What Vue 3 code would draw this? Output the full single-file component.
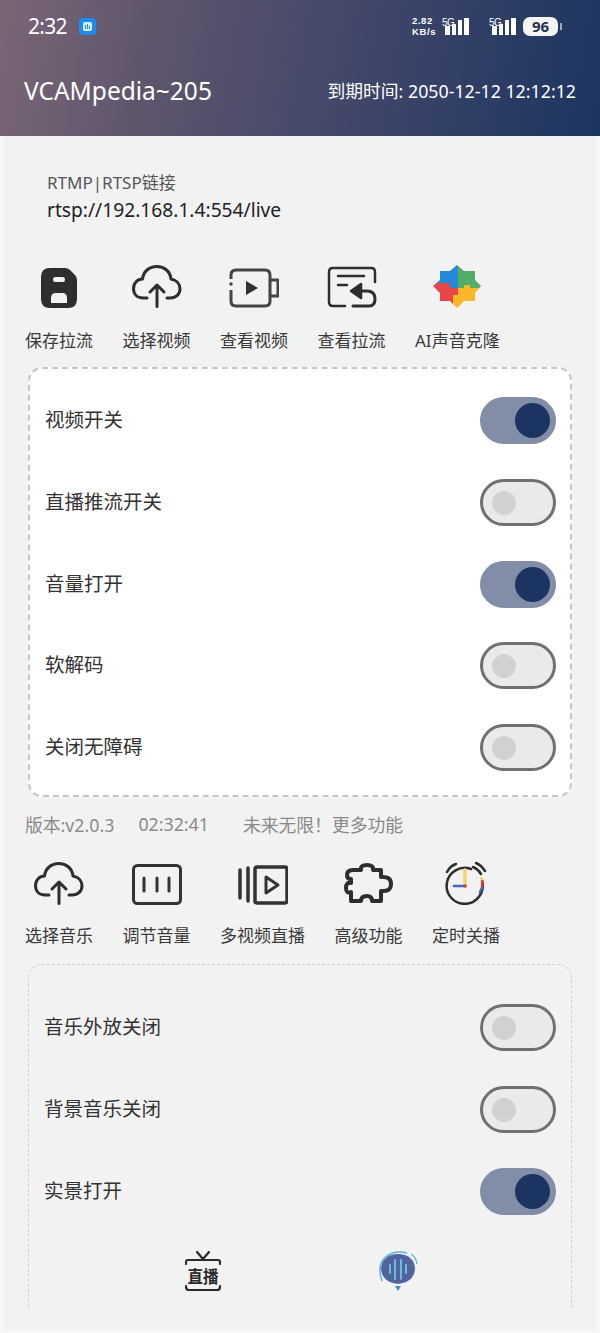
<template>
  <div class="page">
    <header class="header">
      <div class="status">
        <span class="clock">2:32</span>
        <svg class="app-badge" width="17" height="17" viewBox="0 0 17 17">
          <rect x="0" y="0" width="17" height="17" rx="4" fill="#1c8df0" />
          <rect x="4" y="4" width="9" height="9" rx="2" fill="#d8eeff" />
          <path d="M6.500 11V7M8.500 11V6M10.500 11V8" stroke="#1c8df0" stroke-width="1" />
        </svg>
        <div class="status-right">
          <span class="speed">2.82<br />KB/s</span>
          <span class="net">5G</span>
          <svg class="bars" width="24" height="17" viewBox="0 0 24 17"><path d="M0 8h5v9H0zM7 6h4v11H7zM13 2h4v15h-4zM19 0h5v17h-5z" fill="#fff" /></svg>
          <span class="net second">5G</span>
          <svg class="bars" width="24" height="17" viewBox="0 0 24 17"><path d="M0 8h5v9H0zM7 6h4v11H7zM13 2h4v15h-4zM19 0h5v17h-5z" fill="#fff" /></svg>
          <span class="battery">96</span>
          <span class="battery-tip"></span>
        </div>
      </div>
      <div class="title-row">
        <span class="title">VCAMpedia~205</span>
        <span class="expire">到期时间: 2050-12-12 12:12:12</span>
      </div>
    </header>

    <main class="content">
      <div class="link">
        <div class="link-label">RTMP|RTSP链接</div>
        <div class="link-url">rtsp://192.168.1.4:554/live</div>
      </div>

      <div class="tools first">
        <div class="tool">
          <svg width="36" height="40" viewBox="0 0 36 40">
            <path fill-rule="evenodd" fill="#2e2e2e" d="M9 0H24Q27 0 29 2L34 7Q36 9 36 12V31Q36 40 27 40H9Q0 40 0 31V9Q0 0 9 0ZM14 9Q12 9 12 11.500T14 14H22Q24 14 24 11.500T22 9ZM15 25Q10 25 10 30V35H26V30Q26 25 21 25Z" />
          </svg>
          <span>保存拉流</span>
        </div>
        <div class="tool">
          <svg width="50" height="43" viewBox="0 0 50 43" fill="none" stroke="#2e2e2e" stroke-width="3" stroke-linecap="round" stroke-linejoin="round">
            <path d="M15 33H11C5 33 1.500 29 1.500 23.500C1.500 18 5.500 14 10.500 14C11.500 6 17.500 1.500 25 1.500C32 1.500 38 6 39 14C44.500 15 48 19 48 24C48 29 44 33 38 33H35" />
            <path d="M25 41.500V20M18 27L25 20L32 27" />
          </svg>
          <span>选择视频</span>
        </div>
        <div class="tool">
          <svg width="50" height="40" viewBox="0 0 50 40" fill="none" stroke="#444" stroke-width="3">
            <path d="M2 11V7Q2 2 7 2H36Q41 2 41 7V33Q41 38 36 38H7Q2 38 2 33V22" />
            <path d="M42 12H49V28H42" stroke-linejoin="round" />
            <circle cx="2" cy="16" r="1.700" fill="#444" stroke="none" />
            <path d="M17 13L29 20L17 27Z" fill="#333" stroke="none" />
          </svg>
          <span>查看视频</span>
        </div>
        <div class="tool">
          <svg width="50" height="42" viewBox="0 0 50 42" fill="none" stroke="#2e2e2e" stroke-width="2.500" stroke-linecap="round">
            <path d="M48 16V6Q48 2 44 2H6Q2 2 2 6V36Q2 40 6 40H18" />
            <path d="M26 40H42Q48 40 48 33Q48 25 40 25H32" stroke-width="3" />
            <path d="M11 10H37M11 19H20" />
            <path d="M24 25L34 18V32Z" fill="#2e2e2e" stroke-linejoin="round" />
          </svg>
          <span>查看拉流</span>
        </div>
        <div class="tool">
          <svg width="48" height="43" viewBox="0 0 48 43">
            <clipPath id="star-clip">
              <polygon points="24,0 31,6 42,6 42,15 48,21 42,28 42,36 31,36 24,43 17,36 7,36 7,28 0,21 7,15 7,6 17,6" />
            </clipPath>
            <g clip-path="url(#star-clip)">
              <path d="M0 0H25V23H17V18H0Z" fill="#2389d8" />
              <path d="M25 0H48V23H25Z" fill="#52ad69" />
              <path d="M0 18H17V23H25V30H20V43H0Z" fill="#e8474a" />
              <path d="M25 23H31V20H37V23H48V43H20V30H25Z" fill="#fbb72a" />
            </g>
          </svg>
          <span>AI声音克隆</span>
        </div>
      </div>

      <section class="card solid">
        <div v-for="row in topRows" :key="row.label" class="row">
          <span class="row-label">{{ row.label }}</span>
          <span class="toggle" :class="{ on: row.on }"><i></i></span>
        </div>
      </section>

      <div class="version">
        <span>版本:v2.0.3</span>
        <span>02:32:41</span>
        <span class="slogan">未来无限！更多功能</span>
      </div>

      <div class="tools second-row">
        <div class="tool">
          <svg width="50" height="43" viewBox="0 0 50 43" fill="none" stroke="#2e2e2e" stroke-width="3" stroke-linecap="round" stroke-linejoin="round">
            <path d="M15 33H11C5 33 1.500 29 1.500 23.500C1.500 18 5.500 14 10.500 14C11.500 6 17.500 1.500 25 1.500C32 1.500 38 6 39 14C44.500 15 48 19 48 24C48 29 44 33 38 33H35" />
            <path d="M25 41.500V20M18 27L25 20L32 27" />
          </svg>
          <span>选择音乐</span>
        </div>
        <div class="tool">
          <svg width="50" height="41" viewBox="0 0 50 41" fill="none" stroke="#333" stroke-width="3" stroke-linecap="round">
            <rect x="1.500" y="1.500" width="47" height="38" rx="4" />
            <path d="M12 14V27M25 14V27M37 14V27" />
          </svg>
          <span>调节音量</span>
        </div>
        <div class="tool">
          <svg width="50" height="40" viewBox="0 0 50 40" fill="none" stroke="#333" stroke-width="3.500">
            <path d="M2 5V33M10 3V36" stroke-linecap="round" />
            <rect x="17" y="2" width="32" height="36" rx="2" />
            <path d="M28 12L40 20L28 28Z" stroke-width="3" stroke-linejoin="round" />
          </svg>
          <span>多视频直播</span>
        </div>
        <div class="tool">
          <svg width="50" height="42" viewBox="0 0 50 42" fill="none" stroke="#2e2e2e" stroke-width="4" stroke-linejoin="round">
            <path d="M9 7H17Q16 2 23 2Q30 2 29 7H37V14Q47 13 47 21Q47 29 37 28V38H28Q28 33 23 33Q17 33 17 38H7V29Q2 31 2 25Q2 19 7 20V16Q3 16 3 12Q3 7 9 7Z" />
          </svg>
          <span>高级功能</span>
        </div>
        <div class="tool">
          <svg width="42" height="44" viewBox="0 0 42 44" fill="none" stroke-width="2.500" stroke-linecap="round">
            <path d="M37 20A18 18 0 1 1 26 8" stroke="#2e2e2e" />
            <path d="M2 11Q5 5 11 3M31 2Q36 4 40 10M28 6Q33 8 36 13" stroke="#2e2e2e" />
            <path d="M20 9V24" stroke="#f3d66b" stroke-width="3.500" />
            <path d="M9 25H20" stroke="#3f69c4" />
            <circle cx="20" cy="25" r="1.800" fill="#d83a3a" />
            <path d="M36 17L37.500 20" stroke="#f3d66b" />
            <path d="M37.500 20L37 27" stroke="#d83a3a" />
            <path d="M37 27L35 31" stroke="#3f69c4" />
          </svg>
          <span>定时关播</span>
        </div>
      </div>

      <section class="card open">
        <div v-for="row in bottomRows" :key="row.label" class="row">
          <span class="row-label">{{ row.label }}</span>
          <span class="toggle" :class="{ on: row.on }"><i></i></span>
        </div>
      </section>
    </main>

    <nav class="tabbar">
      <svg class="tab-live" width="36" height="40" viewBox="0 0 36 40" fill="none" stroke="#2a2a2a" stroke-width="2.200" stroke-linecap="round">
        <path d="M12 1L18 8L24 1M1 13V11Q1 9 3 9H33Q35 9 35 11V13M1 35V36Q1 39 4 39H32Q35 39 35 36V35" />
        <text x="18" y="32" text-anchor="middle" class="live-text" textLength="31" lengthAdjust="spacingAndGlyphs">直播</text>
      </svg>
      <svg class="tab-voice" width="40" height="42" viewBox="0 0 40 42" fill="none">
        <path d="M20 34Q4 32 3 19C3 10 10 4 20 4C30 4 37 10 37 19Q36 32 20 34Z" fill="#50659d" />
        <path d="M17 36L20 41L23 36Z" fill="#3d8fd0" />
        <path d="M4 31Q-2 14 9 6Q17 0 29 3" stroke="#62b4e0" stroke-width="1.600" />
        <path d="M33 4Q38 7 39 14" stroke="#62b4e0" stroke-width="1.200" />
        <path d="M12 15V23M17 10V29M23 10V29M28 15V23" stroke="#79bfe8" stroke-width="1.800" stroke-linecap="round" />
      </svg>
    </nav>
  </div>
</template>

<script setup>
const topRows = [
  { label: '视频开关', on: true },
  { label: '直播推流开关', on: false },
  { label: '音量打开', on: true },
  { label: '软解码', on: false },
  { label: '关闭无障碍', on: false },
]

const bottomRows = [
  { label: '音乐外放关闭', on: false },
  { label: '背景音乐关闭', on: false },
  { label: '实景打开', on: true },
]
</script>

<style>
html,
body {
  margin: 0;
  overflow: hidden;
}
</style>

<style scoped>
.page {
  position: relative;
  width: 600px;
  height: 1333px;
  overflow: hidden;
  background: #f7f7f8;
  font-family: "Noto Sans", "Noto Sans CJK SC", sans-serif;
  color: #333;
}

.header {
  height: 136px;
  box-sizing: border-box;
  padding: 0 24px;
  color: #fff;
  background: linear-gradient(100deg, #7b6577 0%, #5f566c 25%, #40466a 60%, #1c3560 100%);
}

.status {
  display: flex;
  align-items: center;
  height: 52px;
}

.clock {
  font-size: 21px;
  letter-spacing: -0.700px;
  width: 51px;
  margin-left: 4px;
}

.status-right {
  display: flex;
  align-items: center;
  height: 20px;
  margin-left: auto;
  margin-right: 14px;
}

.speed {
  font-family: "Liberation Sans", sans-serif;
  font-size: 9.500px;
  font-weight: 700;
  letter-spacing: 0.600px;
  line-height: 11px;
  width: 30px;
  white-space: nowrap;
}

.net {
  font-family: "Liberation Sans", sans-serif;
  font-size: 10px;
  align-self: flex-start;
  margin: 1px -10px 0 0;
  line-height: 11px;
  width: 13px;
  letter-spacing: -0.500px;
}

.net.second {
  margin-left: 20px;
}

.bars {
  margin-top: 1px;
}

.battery {
  margin-left: 7px;
  width: 35px;
  height: 19px;
  border-radius: 7px;
  background: #f4f4f4;
  color: #283350;
  font-size: 15px;
  font-weight: 700;
  line-height: 19px;
  text-align: center;
}

.battery-tip {
  width: 2px;
  height: 7px;
  margin-left: 2px;
  background: #9ea6b8;
}

.title-row {
  display: flex;
  justify-content: space-between;
  align-items: center;
  height: 76px;
}

.title {
  font-size: 24.500px;
}

.expire {
  font-size: 17.800px;
}

.content {
  box-sizing: border-box;
  height: 1194px;
  margin: 0 3px;
  padding: 0 25px;
  background: #f2f2f3;
}

.link {
  padding: 35px 0 0 19px;
}

.link-label {
  font-size: 17px;
  line-height: 23px;
  color: #555;
}

.link-url {
  font-size: 19.200px;
  line-height: 32px;
  color: #222;
}

.tools {
  display: flex;
  gap: 29.500px;
  margin-left: -3px;
}

.tools.first {
  margin-top: 22px;
  height: 105px;
}

.tools.second-row {
  margin-top: 8px;
  height: 90px;
}

.tool {
  display: flex;
  flex-direction: column;
  align-items: center;
  justify-content: flex-end;
  font-size: 17px;
  line-height: 24px;
  color: #3a3a3a;
  white-space: nowrap;
}

.tool svg {
  margin-bottom: 21px;
}

.second-row .tool svg {
  margin-bottom: 19px;
}

.card {
  box-sizing: border-box;
  border-radius: 14px;
}

.card.solid {
  height: 430px;
  margin-top: 14px;
  padding-top: 11px;
  background: #fff;
  border: 2px dashed #c6c6c6;
}

.card.solid .row {
  padding-right: 14px;
}

.card.open {
  height: 345px;
  margin-top: 16px;
  padding-top: 22px;
  border: 1px dashed #cfcfcf;
  border-bottom: none;
  border-radius: 14px 14px 0 0;
}

.row {
  display: flex;
  align-items: center;
  justify-content: space-between;
  height: 81.700px;
  padding: 0 15px;
  font-size: 19.500px;
  color: #333;
}

.row-label {
  padding-bottom: 4px;
}

.toggle {
  display: flex;
  align-items: center;
  box-sizing: border-box;
  width: 76px;
  height: 47px;
  padding-left: 9px;
  border: 3px solid #707070;
  border-radius: 24px;
  background: #eaeaea;
}

.toggle i {
  width: 24px;
  height: 24px;
  border-radius: 50%;
  background: #d2d2d2;
}

.toggle.on {
  justify-content: flex-end;
  padding: 0 3px 0 0;
  border-color: #828ea7;
  background: #828ea7;
}

.toggle.on i {
  width: 35px;
  height: 35px;
  background: #1b3462;
}

.version {
  display: flex;
  height: 53px;
  align-items: center;
  margin-left: -3px;
  font-size: 17.800px;
  color: #8a8a8a;
}

.version span + span {
  margin-left: 24px;
}

.version .slogan {
  margin-left: 34px;
}

.tabbar {
  position: absolute;
  left: 0;
  right: 0;
  top: 1250px;
}

.tab-live {
  position: absolute;
  left: 185px;
  top: 1px;
}

.tab-voice {
  position: absolute;
  left: 378px;
  top: 0;
}

.live-text {
  font-size: 17px;
  font-weight: 700;
  fill: #2a2a2a;
  stroke: none;
}
</style>
